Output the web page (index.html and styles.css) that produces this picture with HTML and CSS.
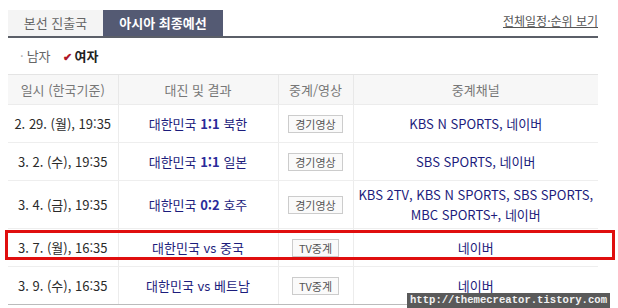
FILE: index.html
```html
<!DOCTYPE html>
<html lang="ko">
<head>
<meta charset="utf-8">
<link rel="stylesheet" href="styles.css">
</head>
<body>
<div class="wrap">
  <div class="tabbar">
    <div class="tab">본선 진출국</div>
    <div class="tab active">아시아 최종예선</div>
    <a class="all-link">전체일정·순위 보기</a>
  </div>
  <div class="filter">
    <span class="opt"><span class="dot">·</span>남자</span>
    <span class="opt on"><span class="check">✔</span>여자</span>
  </div>
  <table class="sched">
    <colgroup>
      <col class="c1"><col class="c2"><col class="c3"><col class="c4">
    </colgroup>
    <thead>
      <tr><th>일시 (한국기준)</th><th>대진 및 결과</th><th>중계/영상</th><th>중계채널</th></tr>
    </thead>
    <tbody>
      <tr><td class="date">2. 29. (월), 19:35</td><td class="match">대한민국 <b>1:1</b> 북한</td><td><span class="btn">경기영상</span></td><td class="ch">KBS N SPORTS, 네이버</td></tr>
      <tr><td class="date">3. 2. (수), 19:35</td><td class="match">대한민국 <b>1:1</b> 일본</td><td><span class="btn">경기영상</span></td><td class="ch">SBS SPORTS, 네이버</td></tr>
      <tr class="tall"><td class="date">3. 4. (금), 19:35</td><td class="match">대한민국 <b>0:2</b> 호주</td><td><span class="btn">경기영상</span></td><td class="ch">KBS 2TV, KBS N SPORTS, SBS SPORTS,<br>MBC SPORTS+, 네이버</td></tr>
      <tr><td class="date">3. 7. (월), 16:35</td><td class="match">대한민국 vs 중국</td><td><span class="btn">TV중계</span></td><td class="ch">네이버</td></tr>
      <tr><td class="date">3. 9. (수), 16:35</td><td class="match">대한민국 vs 베트남</td><td><span class="btn">TV중계</span></td><td class="ch">네이버</td></tr>
    </tbody>
  </table>
  <div class="highlight"></div>
</div>
<div class="watermark">http://themecreator.tistory.com</div>
</body>
</html>
```

FILE: styles.css
```css
html, body {
  margin: 0;
  padding: 0;
  background: #ffffff;
}
body {
  padding: 8px;
  font-family: "Noto Sans CJK KR", "Liberation Sans", sans-serif;
  font-size: 12px;
  line-height: 16px;
  color: #333;
  overflow: hidden;
  height: 292px;
}
.wrap {
  position: relative;
  width: 590px;
}
.tabbar {
  display: flex;
  align-items: flex-end;
  height: 26px;
  margin-top: 2px;
  border-bottom: 2px solid #5b5f68;
}
.tab {
  width: 95px;
  height: 26px;
  line-height: 26px;
  text-align: center;
  background: #f4f4f4;
  color: #666;
  font-size: 13px;
}
.tab.active {
  width: 120px;
  background: #545a73;
  color: #fff;
  font-weight: bold;
}
.all-link {
  margin-left: auto;
  align-self: flex-start;
  margin-top: 3px;
  font-size: 12px;
  color: #555;
  text-decoration: underline;
}
.filter {
  height: 36px;
  display: flex;
  align-items: center;
  padding-left: 12px;
  gap: 12px;
  font-size: 13px;
  color: #666;
}
.opt .dot {
  color: #aaa;
  margin-right: 3px;
}
.opt.on {
  color: #222;
  font-weight: bold;
}
.opt .check {
  color: #b0182a;
  font-size: 11px;
  margin-right: 3px;
}
.sched {
  width: 590px;
  border-collapse: collapse;
  table-layout: fixed;
}
.c1 { width: 110px; }
.c2 { width: 160px; }
.c3 { width: 75px; }
.c4 { width: 245px; }
.sched th {
  height: 29px;
  background: #f7f7f7;
  border-top: 1px solid #e4e4e4;
  border-bottom: 1px solid #ececec;
  border-left: 1px solid #e8e8e8;
  font-weight: normal;
  color: #777;
  font-size: 13px;
  line-height: 16px;
  padding: 0;
}
.sched th:first-child, .sched td:first-child {
  border-left: none;
}
.sched td {
  height: 37px;
  text-align: center;
  border-bottom: 1px solid #eeeeee;
  border-left: 1px solid #ececec;
  padding: 0;
  font-size: 13px;
  line-height: 16px;
}
.sched tr.tall td {
  height: 47px;
}
.sched tbody tr:last-child td {
  border-bottom: 1px solid #bbbbbb;
}
.date {
  color: #2a2a2a;
}
.match {
  color: #1c1c7c;
}
.match b {
  color: #2a2a9a;
}
.sched td.ch {
  color: #1c1c7c;
  line-height: 20px;
}
.btn {
  display: inline-block;
  vertical-align: middle;
  height: 16px;
  line-height: 16px;
  padding: 0 6px;
  border: 1px solid #cccccc;
  background: #fafafa;
  color: #555;
  font-size: 11px;
}
.highlight {
  position: absolute;
  left: -3px;
  top: 220px;
  width: 604px;
  height: 24px;
  border: 3px solid #e00e0e;
}
.watermark {
  position: absolute;
  left: 407px;
  top: 293px;
  width: 203px;
  height: 15px;
  line-height: 15px;
  background: #5a5a5a;
  color: #f2f2f2;
  font-family: "Liberation Mono", monospace;
  font-size: 10.6px;
  font-weight: bold;
  white-space: nowrap;
  text-align: center;
}
```
